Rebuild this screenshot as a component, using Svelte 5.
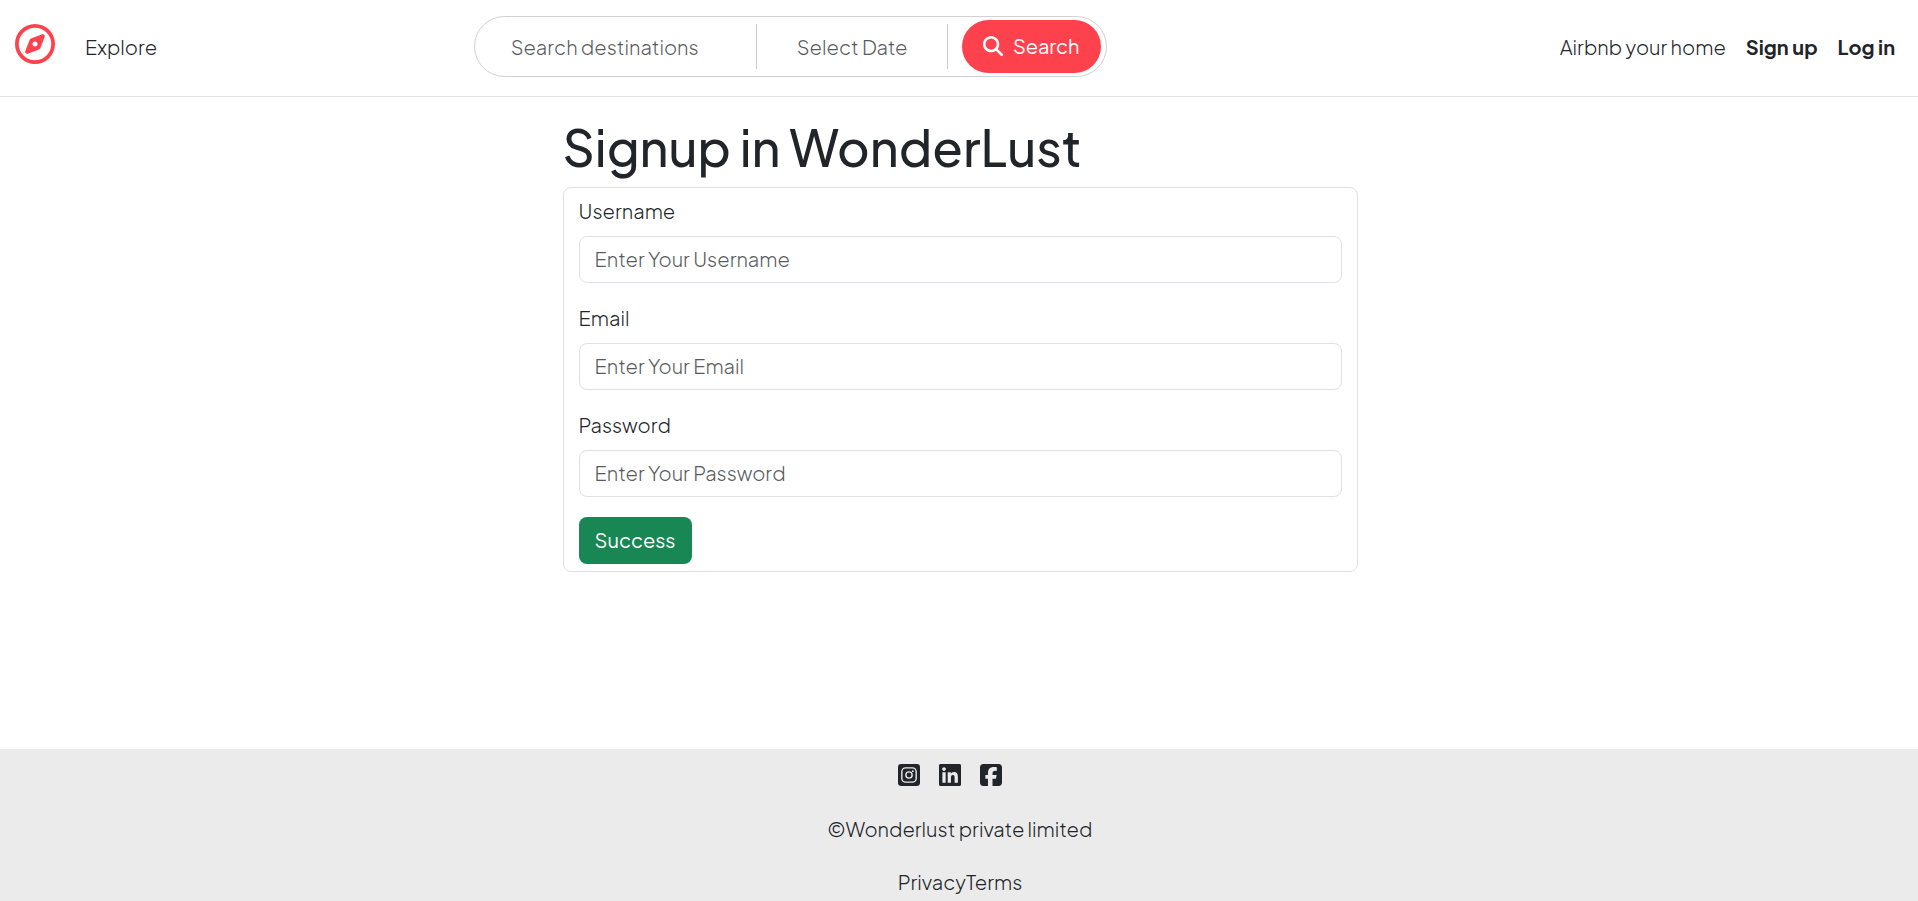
<script>
  const fields = [
    { id: 'username', label: 'Username', type: 'text', placeholder: 'Enter Your Username' },
    { id: 'email', label: 'Email', type: 'email', placeholder: 'Enter Your Email' },
    { id: 'password', label: 'Password', type: 'password', placeholder: 'Enter Your Password' }
  ];
</script>

<div class="page">
  <header class="navbar">
    <nav class="start">
      <a class="brand" href="#home" aria-label="WonderLust home">
        <svg viewBox="0 0 512 512"><path d="M464 256A208 208 0 1 0 48 256a208 208 0 1 0 416 0zM0 256a256 256 0 1 1 512 0A256 256 0 1 1 0 256zm306.7 69.1L162.4 380.6c-19.4 7.5-38.5-11.6-31-31l55.5-144.3c3.3-8.5 9.9-15.1 18.4-18.4l144.3-55.5c19.4-7.5 38.5 11.6 31 31L325.1 306.7c-3.2 8.5-9.9 15.1-18.4 18.4zM288 256a32 32 0 1 0 -64 0 32 32 0 1 0 64 0z" /></svg>
      </a>
      <a href="#explore">Explore</a>
    </nav>
    <form class="search" role="search">
      <input class="where" type="text" placeholder="Search destinations" aria-label="Search destinations" />
      <input class="when" type="text" placeholder="Select Date" aria-label="Select Date" />
      <button type="button">
        <svg viewBox="0 0 512 512"><path d="M416 208c0 45.9-14.9 88.3-40 122.7L502.6 457.4c12.5 12.5 12.5 32.8 0 45.3s-32.8 12.5-45.3 0L330.7 376c-34.4 25.2-76.8 40-122.7 40C93.1 416 0 322.9 0 208S93.1 0 208 0S416 93.1 416 208zM208 352a144 144 0 1 0 0-288 144 144 0 1 0 0 288z" /></svg>
        <span>Search</span>
      </button>
    </form>
    <nav class="end">
      <a href="#host">Airbnb your home</a>
      <a class="strong" href="#signup">Sign up</a>
      <a class="strong" href="#login">Log in</a>
    </nav>
  </header>

  <main>
    <h1>Signup in WonderLust</h1>
    <form class="card">
      {#each fields as field}
        <div class="field">
          <label for={field.id}>{field.label}</label>
          <input id={field.id} type={field.type} placeholder={field.placeholder} />
        </div>
      {/each}
      <button type="button">Success</button>
    </form>
  </main>

  <footer>
    <div class="socials">
      <a href="#instagram" aria-label="Instagram">
        <svg viewBox="0 0 448 448">
          <rect width="448" height="448" rx="64" />
          <g class="line">
            <rect x="78" y="78" width="292" height="292" rx="76" />
            <circle cx="224" cy="224" r="64" />
          </g>
          <circle class="dot" cx="302" cy="146" r="19" />
        </svg>
      </a>
      <a href="#linkedin" aria-label="LinkedIn">
        <svg viewBox="0 32 448 448"><path d="M416 32H31.9C14.3 32 0 46.5 0 64.3v383.4C0 465.5 14.3 480 31.9 480H416c17.6 0 32-14.5 32-32.3V64.3c0-17.8-14.4-32.3-32-32.3zM135.4 416H69V202.2h66.5V416zm-33.2-243c-21.3 0-38.5-17.3-38.5-38.5S80.9 96 102.2 96c21.2 0 38.5 17.3 38.5 38.5 0 21.3-17.2 38.5-38.5 38.5zm282.1 243h-66.4V312c0-24.8-.5-56.7-34.5-56.7-34.6 0-39.9 27-39.9 54.9V416h-66.4V202.2h63.7v29.2h.9c8.9-16.8 30.6-34.5 62.9-34.5 67.2 0 79.7 44.3 79.7 101.9V416z" /></svg>
      </a>
      <a href="#facebook" aria-label="Facebook">
        <svg viewBox="0 32 448 448"><path d="M64 32C28.7 32 0 60.7 0 96V416c0 35.3 28.7 64 64 64h98.2V334.2H109.4V256h52.8V222.3c0-87.1 39.4-127.5 125-127.5c16.2 0 44.2 3.2 55.7 6.4V172c-6-.6-16.5-1-29.6-1c-42 0-58.2 15.9-58.2 57.2V256h83.6l-14.4 78.2H255V480H384c35.3 0 64-28.7 64-64V96c0-35.3-28.7-64-64-64H64z" /></svg>
      </a>
    </div>
    <p>©Wonderlust private limited</p>
    <div class="legal"><a href="#privacy">Privacy</a><a href="#terms">Terms</a></div>
  </footer>
</div>

<style>
  :global(body) {
    margin: 0;
    background: #fff;
  }

  .page {
    display: flex;
    flex-direction: column;
    min-height: 100vh;
    color: #212529;
    font: 300 20px/30px "Plus Jakarta Sans", Inter, sans-serif;
  }

  .page * {
    box-sizing: border-box;
  }

  a {
    color: inherit;
    text-decoration: none;
  }

  input,
  button {
    margin: 0;
    font: inherit;
    color: inherit;
  }

  input::placeholder {
    color: #212529;
    opacity: 0.75;
  }

  svg {
    display: block;
    fill: currentColor;
  }

  .navbar {
    display: grid;
    grid-template-columns: 24.7% auto 1fr;
    align-items: center;
    height: 97px;
    padding-bottom: 3px;
    border-bottom: 1px solid #dee2e6;
  }

  .start {
    display: flex;
    align-items: center;
    gap: 30px;
    padding-left: 15px;
  }

  .brand {
    padding-bottom: 6px;
    color: #fe424d;
  }

  .brand svg {
    width: 40px;
    height: 40px;
  }

  .search {
    display: flex;
    align-items: center;
    height: 61px;
    padding-right: 5px;
    border: 1px solid #d2d2d2;
    border-radius: 31px;
  }

  .search input {
    height: 45px;
    padding: 0 0 0 36px;
    border: 0;
    border-right: 1px solid #ccc;
    background: none;
    outline: 0;
  }

  .search .where {
    width: 282px;
  }

  .search .when {
    width: 191px;
    padding-left: 40px;
  }

  .search button {
    display: flex;
    align-items: center;
    justify-content: center;
    gap: 10px;
    width: 139px;
    height: 53px;
    margin-left: 14px;
    padding: 0 0 2px;
    border: 0;
    border-radius: 27px;
    background: #fe424d;
    color: #fff;
    font-weight: 400;
  }

  .search svg {
    width: 20px;
    height: 20px;
  }

  .end {
    display: flex;
    justify-content: flex-end;
    gap: 20px;
    padding-right: 23px;
  }

  .strong {
    font-weight: 700;
  }

  main {
    flex: 1;
    width: 100%;
    max-width: 797px;
    margin: 0 auto;
    padding: 20px 0 0 2px;
  }

  h1 {
    margin: 0 0 10px;
    font-size: 50px;
    font-weight: 500;
    line-height: 60px;
  }

  .card {
    padding: 8px 15px 7px;
    border: 1px solid #dee2e6;
    border-radius: 8px;
  }

  .field {
    display: grid;
    gap: 10px;
    margin-bottom: 20px;
  }

  .field input {
    width: 100%;
    height: 47px;
    padding: 0 15px 2px;
    border: 1px solid #dee2e6;
    border-radius: 8px;
    background: #fff;
  }

  .card button {
    display: block;
    height: 47px;
    padding: 0 16px 2px;
    border: 0;
    border-radius: 8px;
    background: #198754;
    color: #fff;
    font-weight: 400;
  }

  footer {
    display: flex;
    flex-direction: column;
    align-items: center;
    height: 152px;
    padding: 15px 0 0 2px;
    background: #ebebeb;
  }

  .socials {
    display: flex;
    gap: 19px;
    padding-right: 20px;
  }

  .socials svg {
    width: 22px;
    height: 22px;
  }

  .line {
    fill: none;
    stroke: #ebebeb;
    stroke-width: 28;
  }

  .dot {
    fill: #ebebeb;
  }

  footer p {
    margin: 28px 0 23px;
  }
</style>
